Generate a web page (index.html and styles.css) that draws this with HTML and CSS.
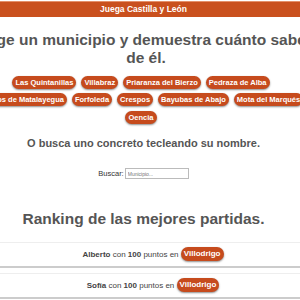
FILE: index.html
```html
<!DOCTYPE html>
<html lang="es">
<head>
    <meta charset="UTF-8">
    <meta name="viewport" content="width=device-width, initial-scale=1.0">
    <title>Juega Castilla y León</title>
    <link rel="stylesheet" href="styles.css">
</head>
<body>
    <div class="topbar">Juega Castilla y León</div>

    <div class="intro">
        <h2 class="title lead">Elige un municipio y demuestra cuánto sabes de él.</h2>
        <div class="towns">
            <span class="town">Las Quintanillas</span>
            <span class="town">Villabraz</span>
            <span class="town">Priaranza del Bierzo</span>
            <span class="town">Pedraza de Alba</span>
            <span class="town">Narros de Matalayegua</span>
            <span class="town">Forfoleda</span>
            <span class="town">Crespos</span>
            <span class="town">Bayubas de Abajo</span>
            <span class="town">Mota del Marqués</span>
            <span class="town">Oencia</span>
        </div>
        <p class="subtitle">O busca uno concreto tecleando su nombre.</p>
        <div class="search">
            <label for="search-input">Buscar:</label>
            <input id="search-input" type="text" placeholder="Municipio...">
        </div>
        <h2 class="title ranking-title">Ranking de las mejores partidas.</h2>
    </div>

    <div class="ranking">
        <div class="rank-row"><b>Alberto</b> con <b>100</b> puntos en <span class="town big">Villodrigo</span></div>
        <div class="rank-row"><b>Sofía</b> con <b>100</b> puntos en <span class="town big">Villodrigo</span></div>
    </div>
</body>
</html>
```

FILE: styles.css
```css
html {
    overflow-x: hidden;
}

body {
    margin: 0;
    padding-right: 13px;
    font-family: "Liberation Sans", Arial, sans-serif;
    color: #555;
    text-align: center;
    display: flex;
    flex-direction: column;
    align-items: center;
}

.topbar {
    align-self: stretch;
    margin: 1px -13px 0 0;
    padding-right: 13px;
    height: 15px;
    line-height: 15px;
    background-color: #c9501e;
    border-top: 1px solid #e4906a;
    color: #fff;
    font-size: 8.5px;
    font-weight: bold;
}

.intro {
    width: 346px;
}

.title {
    font-size: 15px;
    line-height: 18px;
    margin: 14px 0 8.5px;
    color: #555;
}

.title.lead {
    font-size: 15.5px;
    margin-left: 5px;
}

.towns {
    display: flex;
    flex-wrap: wrap;
    justify-content: center;
}

.town {
    display: inline-block;
    height: 13px;
    line-height: 13px;
    padding: 0 3px;
    margin: 0 5px 4.5px 0;
    background-color: #c64b1d;
    color: #fff;
    font-size: 7.5px;
    font-weight: bold;
    border-radius: 7px;
    box-shadow: 0 1px 2px rgba(0, 0, 0, 0.45);
}

.subtitle {
    font-size: 11px;
    line-height: 13px;
    font-weight: bold;
    margin: 9px 0 18px;
}

.search {
    display: flex;
    justify-content: center;
    align-items: center;
    gap: 1px;
    height: 11px;
    font-size: 7.5px;
    color: #333;
}

.search input {
    width: 58px;
    height: 9px;
    padding: 0 2px;
    border: 1px solid #bbb;
    font-size: 5px;
    font-family: inherit;
}

.ranking-title {
    font-size: 15.5px;
    margin: 30.5px 0 14px;
}

.ranking {
    align-self: stretch;
    margin-right: -13px;
}

.rank-row {
    height: 23px;
    line-height: 23px;
    padding-left: 6px;
    border-top: 1px solid #eee;
    border-bottom: 2px solid #ccc;
    margin-bottom: 5px;
    font-size: 8px;
    color: #444;
}

.town.big {
    height: 14px;
    line-height: 14px;
    padding: 0 3px;
    margin: 0;
    font-size: 8px;
    vertical-align: middle;
}
```
